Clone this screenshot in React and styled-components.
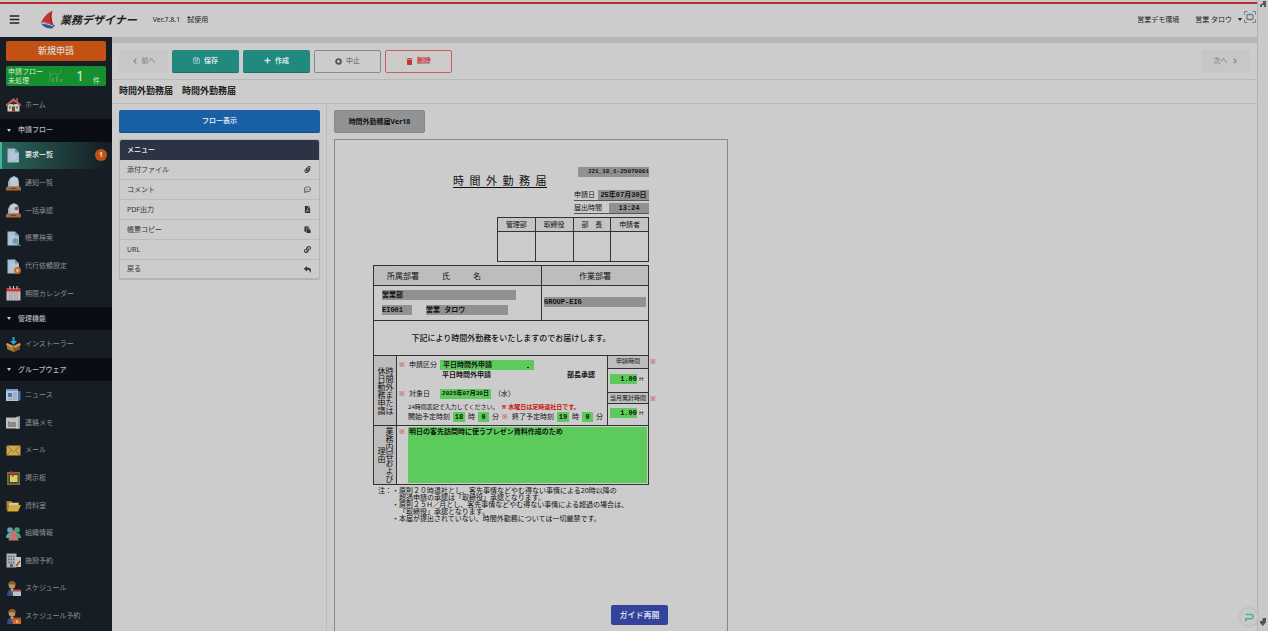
import styled, { createGlobalStyle } from "styled-components";
import { useState } from "react";
import {
  FaChevronLeft,
  FaChevronRight,
  FaRegSave,
  FaPlus,
  FaTrash,
  FaPaperclip,
  FaRegCommentDots,
  FaFilePdf,
  FaPaste,
  FaLink,
  FaReply,
  FaBars,
} from "react-icons/fa";

const GlobalStyle = createGlobalStyle`
  * {
    box-sizing: border-box;
  }

  body {
    margin: 0;
    background-color: #cccccc;
    color: #222;
    font-family: "Noto Sans", "Noto Sans CJK JP", sans-serif;
    font-size: 7px;
    line-height: 10px;
  }

  button, input, select, textarea {
    font-family: inherit;
    font-size: inherit;
    line-height: inherit;
    color: inherit;
    border: none;
    margin: 0;
    padding: 0;
    border-radius: 0;
  }

  button {
    cursor: pointer;
  }

  a {
    color: inherit;
    text-decoration: none;
  }
`;

const Window = styled.div`
  display: flex;
  height: 100vh;
  overflow: hidden;
`;

const Page = styled.div`
  flex: 1;
  min-width: 0;
  display: flex;
  flex-direction: column;
`;

const Rail = styled.div`
  width: 11px;
  display: flex;
  flex-direction: column;
  justify-content: space-between;
  align-items: center;
  background-color: #c8c8c8;
  border-left: 1px solid #b5b5b5;
  padding-bottom: 4px;
`;

/* header */

const RedLine = styled.div`
  height: 4px;
  border-top: 2px solid #c8c8c8;
  background-color: #b5302c;
`;

const Header = styled.header`
  height: 33px;
  display: flex;
  align-items: center;
  padding: 0 1px 2px 9px;
`;

const IconButton = styled.button`
  display: flex;
  background: none;
  color: #222;
`;

const Brand = styled.div`
  display: flex;
  align-items: center;
  gap: 4px;
  margin-left: 21px;
  font-size: 11px;
  font-weight: 700;
  font-style: italic;
  line-height: 16px;
`;

const Version = styled.span`
  margin-left: 16px;
  white-space: pre;
`;

const HeaderRight = styled.div`
  margin-left: auto;
  display: flex;
  align-items: center;
  gap: 16px;
`;

const UserMenu = styled.button`
  display: flex;
  align-items: center;
  gap: 6px;
  background: none;
`;

const Caret = styled.span`
  border: 2px solid transparent;
  border-top: 3px solid ${(props) => props.color || "#222"};
  border-bottom: 0;
`;

const Expand = styled.button`
  display: flex;
  background: none;
  margin: 0 0 6px -14px;
`;

/* sidebar */

const Body = styled.div`
  flex: 1;
  min-height: 0;
  display: flex;
`;

const Sidebar = styled.nav`
  width: 112px;
  display: flex;
  flex-direction: column;
  background-color: #161d25;
  padding-bottom: 1px;
`;

const SideTop = styled.div`
  height: 54px;
  padding: 4px 6px;
  display: flex;
  flex-direction: column;
  gap: 5px;
`;

const NewButton = styled.button`
  height: 20px;
  border-radius: 2px;
  background-color: #c25213;
  color: #dcd6d0;
  font-size: 9px;
  font-weight: 500;
`;

const Pending = styled.a`
  height: 20px;
  display: flex;
  align-items: center;
  gap: 6px;
  border-radius: 2px;
  background-color: #16902e;
  color: #dde6dd;
  padding: 0 6px 0 2px;
  line-height: 9px;
`;

const PendingCount = styled.span`
  margin-left: auto;
  font-size: 14px;
  line-height: 18px;
`;

const PendingUnit = styled.span`
  margin: 8px 0 0 3px;
`;

const SideLink = styled.a`
  flex: 1;
  display: flex;
  align-items: center;
  gap: 4px;
  padding: 0 5px 0 6px;
  color: ${(props) => (props.$active ? "#d8dcdc" : "#8c9094")};
  font-weight: ${(props) => (props.$active ? 700 : 400)};
  background: ${(props) =>
    props.$active
      ? "linear-gradient(to right, #2a685c, #161d25 95%)"
      : "transparent"};
  box-shadow: ${(props) => (props.$active ? "inset 2px 0 #3fb698" : "none")};

  svg {
    width: 15px;
    height: 15px;
    flex: none;
  }
`;

const Badge = styled.span`
  width: 12px;
  height: 12px;
  margin-left: auto;
  border-radius: 50%;
  background-color: #c25213;
  color: #e4dcd6;
  line-height: 12px;
  text-align: center;
`;

const SectionButton = styled.button`
  height: 23px;
  display: flex;
  align-items: center;
  gap: 7px;
  padding: 0 7px;
  background-color: #0a0e14;
  color: #b4b8bc;
  font-weight: 500;
`;

/* main */

const Main = styled.main`
  flex: 1;
  min-width: 0;
  display: flex;
  flex-direction: column;
  border-top: 6px solid #b7b7b7;
`;

const Toolbar = styled.div`
  height: 37px;
  display: flex;
  align-items: center;
  gap: 4px;
  padding: 0 7px;
  border-bottom: 1px solid #b9b9b9;
`;

const ToolButton = styled.button`
  width: 67px;
  height: 23px;
  display: flex;
  align-items: center;
  justify-content: center;
  gap: 4px;
  border-radius: 2px;
  color: #d5e6e3;
  background-color: #21897e;
  border-bottom: 1px solid #196f66;
  font-weight: 700;
`;

const OutlineButton = styled(ToolButton)`
  background-color: #cccccc;
  font-weight: ${(props) => (props.$danger ? 700 : 400)};
  color: ${(props) => (props.$danger ? "#c0343a" : "#555")};
  border: 1px solid ${(props) => (props.$danger ? "#cd5d61" : "#8a8a8a")};
`;

const StepButton = styled(ToolButton)`
  width: 49px;
  background-color: #c7c7c7;
  border: none;
  color: #777;
  font-weight: 400;
`;

const Spacer = styled.div`
  flex: 1;
`;

const TitleRow = styled.h1`
  margin: 0;
  height: 24px;
  padding: 0 7px;
  border-bottom: 1px solid #b9b9b9;
  font-size: 9px;
  line-height: 22px;
  font-weight: 700;
  white-space: pre;
`;

const Content = styled.div`
  flex: 1;
  min-height: 0;
  display: flex;
`;

const LeftPane = styled.div`
  width: 215px;
  padding: 6px 6px 6px 7px;
  border-right: 1px solid #bdbdbd;
`;

const FlowButton = styled.button`
  width: 100%;
  height: 23px;
  border-radius: 2px;
  background-color: #1760a5;
  border-bottom: 1px solid #124e88;
  color: #d5dfea;
  font-weight: 700;
`;

const Menu = styled.div`
  margin-top: 6px;
  border: 1px solid #b4b4b4;
  border-radius: 2px;
  box-shadow: 0 1px 1px #b0b0b0;
`;

const MenuTitle = styled.h2`
  margin: 0;
  height: 20px;
  padding: 0 7px;
  border-radius: 2px 2px 0 0;
  background-color: #2c3344;
  color: #d4d6da;
  font-size: 7px;
  line-height: 19px;
`;

const MenuItem = styled.a`
  height: 20px;
  display: flex;
  align-items: center;
  justify-content: space-between;
  padding: 0 8px 0 7px;
  border-bottom: 1px solid #bbbbbb;
  color: #333;

  &:last-child {
    height: 18px;
    border-bottom: none;
  }
`;

const RightPane = styled.div`
  flex: 1;
  padding: 6px 7px 0;
  overflow: hidden;
`;

const Tab = styled.button`
  display: block;
  width: 91px;
  height: 23px;
  border-radius: 2px;
  background-color: #919294;
  border: 1px solid #868789;
  color: #111;
  font-weight: 700;
`;

/* document */

const Paper = styled.form`
  width: 394px;
  height: 560px;
  margin-top: 6px;
  padding: 27px 79px 0 38px;
  border: 1px solid #888;
  color: #111;
`;

const Sheet = styled.div`
  width: 276px;
`;

const DocTop = styled.div`
  display: flex;
  justify-content: space-between;
`;

const DocTitle = styled.h2`
  margin: 7px 0 0 80px;
  height: 14px;
  font-size: 11px;
  font-weight: 400;
  line-height: 14px;
  white-space: pre;
  border-bottom: 1px solid #111;
`;

const DocMeta = styled.div`
  width: 75px;
  display: flex;
  flex-direction: column;
  align-items: flex-end;
`;

const MetaRow = styled.label`
  align-self: stretch;
  height: ${(props) => (props.$first ? 24 : 13)}px;
  display: flex;
  align-items: flex-end;
  justify-content: space-between;
  border-bottom: 1px solid #555;
`;

const Field = styled.input`
  width: ${(props) => props.$width}px;
  height: 10px;
  background-color: ${(props) => (props.$editable ? "#5ccb5c" : "#919191")};
  font-family: "Liberation Mono", "Noto Sans CJK JP", monospace;
  font-size: ${(props) => (props.$small ? 6 : 7)}px;
  font-weight: 700;
  text-align: ${(props) => props.$align || "left"};
  outline: none;
`;

const Stamps = styled.table`
  width: 152px;
  margin: 3px 0 3px auto;
  border-collapse: collapse;
  table-layout: fixed;

  th, td {
    border: 1px solid #333;
    padding: 0;
    text-align: center;
    font-weight: 400;
    white-space: pre;
  }

  th {
    height: 14px;
    background-color: #c4c4c4;
  }

  td {
    height: 30px;
  }
`;

const Sheets = styled.div`
  border: 1px solid #333;
`;

const Line = styled.div`
  display: grid;
  grid-template-columns: ${(props) => props.$columns};
  height: ${(props) => props.$height}px;
  border-bottom: 1px solid #333;

  &:last-child {
    border-bottom: none;
  }

  & > * + * {
    border-left: 1px solid #333;
  }
`;

const HeadCell = styled.div`
  display: flex;
  align-items: center;
  justify-content: ${(props) => (props.$center ? "center" : "flex-start")};
  gap: 23px;
  padding: 0 13px;
  background-color: #bdbdbd;
  font-size: 8px;
`;

const DeptCell = styled.div`
  padding: 4px 8px;
  display: flex;
  flex-wrap: wrap;
  align-content: flex-start;
  gap: 5px 14px;
`;

const GroupCell = styled.div`
  display: flex;
  align-items: center;
  padding: 0 2px 2px;
`;

const Statement = styled.p`
  margin: 0;
  font-size: 8px;
  font-weight: 500;
  line-height: 34px;
  text-align: center;
`;

const SideLabel = styled.div`
  display: flex;
  align-items: center;
  justify-content: center;
  writing-mode: vertical-rl;
  background-color: #bdbdbd;
  font-size: 8px;
  line-height: 8px;
  text-align: center;
`;

const Entry = styled.div`
  display: flex;
  flex-direction: column;
  padding: 4px 2px 0;
`;

const EntryRow = styled.div`
  display: flex;
  align-items: center;
  gap: 3px;
  height: 10px;
  padding-left: ${(props) => props.$indent || 0}px;
  margin-bottom: ${(props) => props.$after || 0}px;
  white-space: nowrap;
`;

const Required = styled.span`
  width: 7px;
  color: #c8322f;
`;

const EntryLabel = styled.label`
  width: 28px;
`;

const KindSelect = styled.select`
  width: 94px;
  height: 10px;
  padding-left: 3px;
  appearance: none;
  background: linear-gradient(#222, #222) no-repeat right 5px bottom 2px / 2px
    1px #5ccb5c;
  font-weight: 700;
`;

const Strong = styled.b`
  margin-right: ${(props) => props.$after || 0}px;
`;

const Hint = styled.span`
  font-size: 6px;
  color: ${(props) => (props.$red ? "#c8100c" : "#111")};
  font-weight: ${(props) => (props.$red ? 700 : 400)};
`;

const Totals = styled.div`
  display: grid;
  grid-template-rows: 13px 24px 11px 1fr;
`;

const TotalHead = styled.div`
  position: relative;
  border-bottom: 1px solid #333;
  background-color: #bdbdbd;
  font-size: 6px;
  line-height: 11px;
  text-align: center;
  white-space: nowrap;
`;

const TotalCell = styled.label`
  display: flex;
  align-items: center;
  gap: 2px;
  padding: 0 0 3px 2px;
  border-bottom: 1px solid #333;
  font-size: 6px;

  &:last-child {
    border-bottom: none;
  }
`;

const OuterMark = styled.span`
  position: absolute;
  left: 100%;
  margin-left: 2px;
  color: #c8322f;
  font-size: 7px;
`;

const ReasonCell = styled.div`
  display: flex;
  gap: 2px;
  padding: 1px 1px 1px 2px;
`;

const Reason = styled.textarea`
  flex: 1;
  min-width: 0;
  height: 56px;
  padding-left: 1px;
  background-color: #5ccb5c;
  font-weight: 700;
  line-height: 9px;
  resize: none;
  outline: none;
`;

const Notes = styled.div`
  display: flex;
  padding: 2px 0 0 5px;
  line-height: 7px;
  white-space: nowrap;

  ul {
    margin: 0;
    padding: 0 0 0 7px;
    list-style: none;
  }

  li {
    position: relative;
  }

  li::before {
    content: "・";
    position: absolute;
    right: 100%;
  }
`;

/* floating */

const GuideButton = styled.button`
  position: fixed;
  left: calc(50% - 23px);
  bottom: 6px;
  width: 57px;
  height: 20px;
  border-radius: 2px;
  background-color: #33429c;
  color: #d4d7e8;
  font-size: 8px;
  font-weight: 700;
`;

const HelpButton = styled.button`
  position: fixed;
  right: 10px;
  bottom: 5px;
  width: 18px;
  height: 18px;
  display: flex;
  align-items: center;
  justify-content: center;
  border-radius: 50%;
  background-color: #c9c9c9;
  box-shadow: 0 0 3px #aaa;
`;

const Doc = ({ children }) => (
  <svg viewBox="0 0 15 15">
    <path d="M1.500 0.500h7.500l4 4v10H1.500z" fill="#a9bfd2" />
    <path d="M9 0.500l4 4H9z" fill="#6f91b0" />
    <path d="M4 5h4M4 7h7M4 9h7M4 11h6" stroke="#c8d4de" strokeWidth="0.8" />
    {children}
  </svg>
);

const Tray = ({ dot }) => (
  <svg viewBox="0 0 15 15">
    <path d="M2 11V6l2-4 4-2 4 2 1 4v5z" fill="#9fb2c2" />
    <path d="M5 10V4l2-2v8M9 10V2l2 2v6" stroke="#d0dae2" strokeWidth="1.2" fill="none" />
    <path d="M1 10.500h13l1 1v3H0v-3z" fill="#a3683c" />
    <path d="M5 12.500h5" stroke="#6d4020" />
    {dot && <circle cx="10.500" cy="5.500" r="1.800" fill="#c0402f" />}
  </svg>
);

const Person = ({ color }) => (
  <svg viewBox="0 0 15 15">
    <path d="M1 15c0-5 2-7 5-7s5 2 5 7z" fill="#284f86" />
    <path d="M5 8h2l-1 5z" fill="#dcdcdc" />
    <path d="M6 9v5" stroke="#b0322c" />
    <circle cx="6" cy="4.500" r="3.200" fill="#c49564" />
    <path d="M2 5c-1-6 8-7 8-1-3 0-4-1-5-1z" fill="#8a5c2c" />
    <path d="M7 9h8v6H7z" fill={color === "plan" ? "#d56a25" : "#b5c3d2"} />
    <path d="M7 8.500h8v2H7z" fill={color === "plan" ? "#b14f18" : "#c14945"} />
    {color === "plan" && <path d="M11 11v3" stroke="#eee" />}
  </svg>
);

const icons = {
  home: (
    <svg viewBox="0 0 15 15">
      <path d="M1.500 7h12v7.500h-12z" fill="#cfc8b8" />
      <path d="M10 1h2v5h-2z" fill="#984a43" />
      <path d="M7.500 1L0 7.500v2l7.500-5 7.500 5v-2z" fill="#bd5a58" />
      <path d="M6 9.500h3v5H6z" fill="#70452f" />
      <path d="M3 9.500h2v2H3zM10 9.500h2v2h-2z" fill="#597a94" />
      <circle cx="7.500" cy="7" r="1" fill="#74543c" />
    </svg>
  ),
  request: <Doc />,
  notice: <Tray />,
  approve: <Tray dot />,
  search: (
    <Doc>
      <path d="M11 12l3 3" stroke="#667885" strokeWidth="2" />
      <circle cx="9.500" cy="10" r="3" fill="#5f9fa9" stroke="#9eb0b7" />
    </Doc>
  ),
  proxy: (
    <Doc>
      <circle cx="11.500" cy="11.500" r="2.400" fill="#d8c3ad" stroke="#cc6c17" strokeWidth="2" />
    </Doc>
  ),
  calendar: (
    <svg viewBox="0 0 15 15">
      <path d="M0.500 5h14v9.500H0.500z" fill="#c5bfc0" />
      <path d="M0.500 2h14v3.500H0.500z" fill="#c23c43" />
      <path d="M3 7.500h9.500M3 10h9.500M3 12.500h9.500" stroke="#9c999f" strokeWidth="1.300" strokeDasharray="1.500 1" />
      <path d="M4 0v3M7.500 0v3M11 0v3" stroke="#ddd" />
    </svg>
  ),
  install: (
    <svg viewBox="0 0 15 15">
      <path d="M1 6l6.500 3L14 6v6l-6.500 3L1 12z" fill="#a87635" />
      <path d="M7.500 9v6L14 12V6z" fill="#835722" />
      <path d="M1 6l-1 2 6 3 1.500-2L9 11l6-3-1-2-6.500 3z" fill="#c99a54" />
      <path d="M6.500 0h2v4H11L7.500 8 4 4h2.500z" fill="#26a9c6" />
    </svg>
  ),
  news: (
    <svg viewBox="0 0 15 15">
      <path d="M0 2h12v12H0z" fill="#b9c7d5" />
      <path d="M12 4h2.500v8.500L13 14h-1z" fill="#4b78a8" />
      <path d="M0 2h12v2H0z" fill="#6e9cc9" />
      <path d="M2 6h4v4H2z" fill="#3f77b5" />
      <path d="M7 6h4M7 8h4M7 10h4M2 12h9" stroke="#8496a8" />
    </svg>
  ),
  memo: (
    <svg viewBox="0 0 15 15">
      <path d="M0 2.500h11v11H0z" fill="#c0c0bf" />
      <path d="M10 2l4-1v12l-1 1h-3z" fill="#a1a4a4" />
      <path d="M2 7h1v5M5 7v5M7 7v5M9 7v5" stroke="#555" fill="none" />
      <path d="M11 2v11" stroke="#e0e0e0" />
    </svg>
  ),
  mail: (
    <svg viewBox="0 0 15 15">
      <path d="M0.500 2.500h14v10H0.500z" fill="#cfac47" />
      <path d="M1 3l6.500 6L14 3M1 12l4-4M14 12l-4-4" stroke="#8b6b22" fill="none" strokeWidth="0.800" />
    </svg>
  ),
  board: (
    <svg viewBox="0 0 15 15">
      <path d="M1 2h13v13H1z" fill="#8c6536" />
      <path d="M2.500 3.500h10v10h-10z" fill="#265833" />
      <path d="M4 5h7.500v7H4z" fill="#d8cd68" />
      <path d="M4 1l4 1v4l-2 1-1-3z" fill="#bd3933" />
    </svg>
  ),
  folder: (
    <svg viewBox="0 0 15 15">
      <path d="M0.500 3h5l1 1.500H13V12H0.500z" fill="#a78029" />
      <path d="M3 5h9v3H3z" fill="#cecac0" />
      <path d="M4 7h11l-3 6.500H1z" fill="#d7a93c" />
    </svg>
  ),
  group: (
    <svg viewBox="0 0 15 15">
      <circle cx="4" cy="4" r="2.800" fill="#57a9b3" />
      <path d="M0 12c0-7 8-7 8 0z" fill="#57a9b3" />
      <circle cx="11" cy="4" r="2.800" fill="#46a178" />
      <path d="M7 12c0-7 8-7 8 0z" fill="#46a178" />
      <circle cx="7.500" cy="7" r="2.800" fill="#c77172" />
      <path d="M2.500 14.500c0-7 10-7 10 0z" fill="#c77172" />
    </svg>
  ),
  facility: (
    <svg viewBox="0 0 15 15">
      <path d="M0.500 0.500h10v14h-10z" fill="#b5b0b4" />
      <path d="M2 3.500h7M2 6.500h7M2 9.500h7" stroke="#536c91" strokeWidth="1.500" strokeDasharray="1.500 1" />
      <path d="M4 11h3v3H4z" fill="#53647c" />
      <path d="M9 4h6v10H9z" fill="#c9c3bd" />
      <path d="M14 8l-4 5" stroke="#ae4337" strokeWidth="1.500" />
    </svg>
  ),
  schedule: <Person />,
  plan: <Person color="plan" />,
};

const groups = [
  { links: [["home", "ホーム"]] },
  {
    title: "申請フロー",
    links: [
      ["request", "要求一覧", 1],
      ["notice", "通知一覧"],
      ["approve", "一括承認"],
      ["search", "帳票検索"],
      ["proxy", "代行依頼設定"],
      ["calendar", "期限カレンダー"],
    ],
  },
  { title: "管理機能", links: [["install", "インストーラー"]] },
  {
    title: "グループウェア",
    links: [
      ["news", "ニュース"],
      ["memo", "連絡メモ"],
      ["mail", "メール"],
      ["board", "掲示板"],
      ["folder", "資料室"],
      ["group", "組織情報"],
      ["facility", "施設予約"],
      ["schedule", "スケジュール"],
      ["plan", "スケジュール予約"],
    ],
  },
];

const menuItems = [
  ["添付ファイル", FaPaperclip],
  ["コメント", FaRegCommentDots],
  ["PDF出力", FaFilePdf],
  ["帳票コピー", FaPaste],
  ["URL", FaLink],
  ["戻る", FaReply],
];

const SideGroup = ({ title, links }) => (
  <>
    {title && (
      <SectionButton>
        <Caret color="#c8cccf" />
        {title}
      </SectionButton>
    )}
    {links.map(([icon, label, count]) => (
      <SideLink key={icon} href="#" $active={icon === "request"}>
        {icons[icon]}
        {label}
        {count && <Badge>{count}</Badge>}
      </SideLink>
    ))}
  </>
);

const OvertimeForm = () => {
  const [values, setValues] = useState({
    date: "2025年07月30日",
    startHour: "18",
    startMinute: "0",
    endHour: "19",
    endMinute: "0",
    hours: "1.00",
    total: "1.00",
    reason: "明日の客先訪問時に使うプレゼン資料作成のため",
  });

  const bind = (name) => ({
    id: name,
    value: values[name],
    onChange: (e) => setValues({ ...values, [name]: e.target.value }),
  });

  return (
    <Paper>
      <Sheet>
        <DocTop>
          <DocTitle>{[..."時間外勤務届"].join("\u2002")}</DocTitle>
          <DocMeta>
            <Field $width={71} $small $align="right" aria-label="文書番号" readOnly value="J21_18_1-25070001" />
            <MetaRow $first>
              申請日
              <Field $width={51} $align="center" readOnly value="25年07月30日" />
            </MetaRow>
            <MetaRow>
              届出時間
              <Field $width={40} $align="center" readOnly value="13:24" />
            </MetaRow>
          </DocMeta>
        </DocTop>

        <Stamps>
          <thead>
            <tr>
              <th>管理部</th>
              <th>取締役</th>
              <th>部　長</th>
              <th>申請者</th>
            </tr>
          </thead>
          <tbody>
            <tr>
              <td />
              <td />
              <td />
              <td />
            </tr>
          </tbody>
        </Stamps>

        <Sheets>
          <Line $columns="167px 1fr" $height={20}>
            <HeadCell>
              <span>所属部署</span>
              <span>氏</span>
              <span>名</span>
            </HeadCell>
            <HeadCell $center>作業部署</HeadCell>
          </Line>
          <Line $columns="167px 1fr" $height={35}>
            <DeptCell>
              <Field $width={134} aria-label="所属部署" readOnly value="営業部" />
              <Field $width={30} aria-label="所属コード" readOnly value="EIG01" />
              <Field $width={82} aria-label="氏名" readOnly value="営業 タロウ" />
            </DeptCell>
            <GroupCell>
              <Field $width={102} aria-label="作業部署" readOnly value="GROUP-EIG" />
            </GroupCell>
          </Line>
          <Line $columns="1fr" $height={35}>
            <Statement>下記により時間外勤務をいたしますのでお届けします。</Statement>
          </Line>
          <Line $columns="22px 1fr 41px" $height={70}>
            <SideLabel>
              <span>
                時間外または
                <br />
                休日勤務申請
              </span>
            </SideLabel>
            <Entry>
              <EntryRow>
                <Required>※</Required>
                <EntryLabel htmlFor="kind">申請区分</EntryLabel>
                <KindSelect id="kind">
                  <option>平日時間外申請</option>
                </KindSelect>
              </EntryRow>
              <EntryRow $indent={43} $after={9}>
                <Strong $after={73}>平日時間外申請</Strong>
                <Strong>部長承認</Strong>
              </EntryRow>
              <EntryRow $after={3}>
                <Required>※</Required>
                <EntryLabel htmlFor="date">対象日</EntryLabel>
                <Field $width={51} $editable $small $align="center" {...bind("date")} />
                （水）
              </EntryRow>
              <EntryRow $indent={9}>
                <Hint>24時間表記で入力してください。</Hint>
                <Hint $red>※ 水曜日は定時退社日です。</Hint>
              </EntryRow>
              <EntryRow $indent={9}>
                <label htmlFor="startHour">開始予定時刻</label>
                <Field $width={12} $editable $align="center" {...bind("startHour")} />
                時
                <Field $width={11} $editable $align="center" aria-label="開始分" {...bind("startMinute")} />
                分
                <Required>※</Required>
                <label htmlFor="endHour">終了予定時刻</label>
                <Field $width={12} $editable $align="center" {...bind("endHour")} />
                時
                <Field $width={11} $editable $align="center" aria-label="終了分" {...bind("endMinute")} />
                分
              </EntryRow>
            </Entry>
            <Totals>
              <TotalHead>
                申請時間
                <OuterMark>※</OuterMark>
              </TotalHead>
              <TotalCell>
                <Field $width={27} $editable $align="right" aria-label="申請時間" {...bind("hours")} />H
              </TotalCell>
              <TotalHead>
                当月累計時間
                <OuterMark>※</OuterMark>
              </TotalHead>
              <TotalCell>
                <Field $width={27} $editable $align="right" aria-label="当月累計時間" {...bind("total")} />H
              </TotalCell>
            </Totals>
          </Line>
          <Line $columns="22px 1fr" $height={58}>
            <SideLabel>
              <span>
                業務内容および
                <br />
                理由
              </span>
            </SideLabel>
            <ReasonCell>
              <Required>※</Required>
              <Reason aria-label="業務内容および理由" {...bind("reason")} />
            </ReasonCell>
          </Line>
        </Sheets>

        <Notes>
          注：
          <ul>
            <li>
              原則２０時退社とし、客先事情などやむ得ない事情による20時以降の
              <br />
              超過申請の承認は「取締役」承認となります。
            </li>
            <li>
              原則２５H／月とし、客先事情などやむ得ない事情による超過の場合は、
              <br />
              「取締役」承認となります。
            </li>
            <li>本届が提出されていない、時間外勤務については一切厳禁です。</li>
          </ul>
        </Notes>
      </Sheet>
    </Paper>
  );
};

const App = () => {
  return (
    <Window>
      <GlobalStyle />
      <Page>
        <RedLine />
        <Header>
          <IconButton aria-label="メニュー開閉">
            <FaBars size={11} />
          </IconButton>
          <Brand>
            <svg width="15" height="18" viewBox="0 0 15 18">
              <path d="M11 0C6 2 2 7 0 12c4-1 8 0 12 2C11 9 10 4 11 0z" fill="#c23230" />
              <path d="M11 0C9 4 9 9 12 14" stroke="#8e2324" fill="none" />
              <path d="M0 12.500c5-1 10 0 14 2l-3 3c-5 0-8-1-11-5z" fill="#34548d" />
              <path d="M1 12.500c4 0 7 1 11 2.500" stroke="#ccc" fill="none" />
            </svg>
            業務デザイナー
          </Brand>
          <Version>Ver.7.8.1　試使用</Version>
          <HeaderRight>
            <span>営業デモ環境</span>
            <UserMenu>
              営業 タロウ
              <Caret />
            </UserMenu>
            <Expand aria-label="全画面">
              <svg width="12" height="12" viewBox="0 0 12 12" fill="none" stroke="#6f7c96">
                <path d="M0.500 3.500v-3h3M8.500 0.500h3v3M11.500 8.500v3h-3M3.500 11.500h-3v-3" />
                <rect x="3" y="3.500" width="6" height="5" rx="1" strokeWidth="1.300" />
              </svg>
            </Expand>
          </HeaderRight>
        </Header>
        <Body>
          <Sidebar>
            <SideTop>
              <NewButton>新規申請</NewButton>
              <Pending href="#">
                <span>
                  申請フロー
                  <br />
                  未処理
                </span>
                <svg width="14" height="14" viewBox="0 0 14 14" stroke="#42a552" fill="none">
                  <path d="M1 2v11M1 7l5-3 3 2 4-5" />
                  <path d="M4 13V9M8 13V7M12 13v-3" strokeWidth="2" />
                </svg>
                <PendingCount>1</PendingCount>
                <PendingUnit>件</PendingUnit>
              </Pending>
            </SideTop>
            {groups.map((group, i) => (
              <SideGroup key={i} {...group} />
            ))}
          </Sidebar>
          <Main>
            <Toolbar>
              <StepButton disabled>
                <FaChevronLeft size={6} />
                前へ
              </StepButton>
              <ToolButton>
                <FaRegSave size={7} />
                保存
              </ToolButton>
              <ToolButton>
                <FaPlus size={7} />
                作成
              </ToolButton>
              <OutlineButton>
                <svg width="7" height="7" viewBox="0 0 7 7">
                  <circle cx="3.500" cy="3.500" r="2.400" fill="none" stroke="#555" strokeWidth="1.900" />
                </svg>
                中止
              </OutlineButton>
              <OutlineButton $danger>
                <FaTrash size={7} />
                削除
              </OutlineButton>
              <Spacer />
              <StepButton disabled>
                次へ
                <FaChevronRight size={6} />
              </StepButton>
            </Toolbar>
            <TitleRow>時間外勤務届　時間外勤務届</TitleRow>
            <Content>
              <LeftPane>
                <FlowButton>フロー表示</FlowButton>
                <Menu>
                  <MenuTitle>メニュー</MenuTitle>
                  {menuItems.map(([label, Icon]) => (
                    <MenuItem key={label} href="#">
                      {label}
                      <Icon size={7} />
                    </MenuItem>
                  ))}
                </Menu>
              </LeftPane>
              <RightPane>
                <Tab>時間外勤務届Ver18</Tab>
                <OvertimeForm />
              </RightPane>
            </Content>
          </Main>
        </Body>
      </Page>
      <Rail>
        <svg width="8" height="9" viewBox="0 0 8 9">
          <path d="M4 1h3v6H5V5H3v2H1V5l3-2z" fill="#555" />
        </svg>
        <svg width="8" height="9" viewBox="0 0 8 9">
          <path d="M4 0h3v4L4 8 1 5V3h2z" fill="#555" />
        </svg>
      </Rail>
      <GuideButton>ガイド再開</GuideButton>
      <HelpButton aria-label="ヘルプ">
        <svg width="10" height="9" viewBox="0 0 10 9" fill="none">
          <path d="M2 1.500h5a2 2 0 0 1 0 4.200H1" stroke="#45b693" strokeWidth="1.600" />
          <path d="M1 7.500h1.500" stroke="#6668c8" strokeWidth="1.500" />
        </svg>
      </HelpButton>
    </Window>
  );
};

export default App;
